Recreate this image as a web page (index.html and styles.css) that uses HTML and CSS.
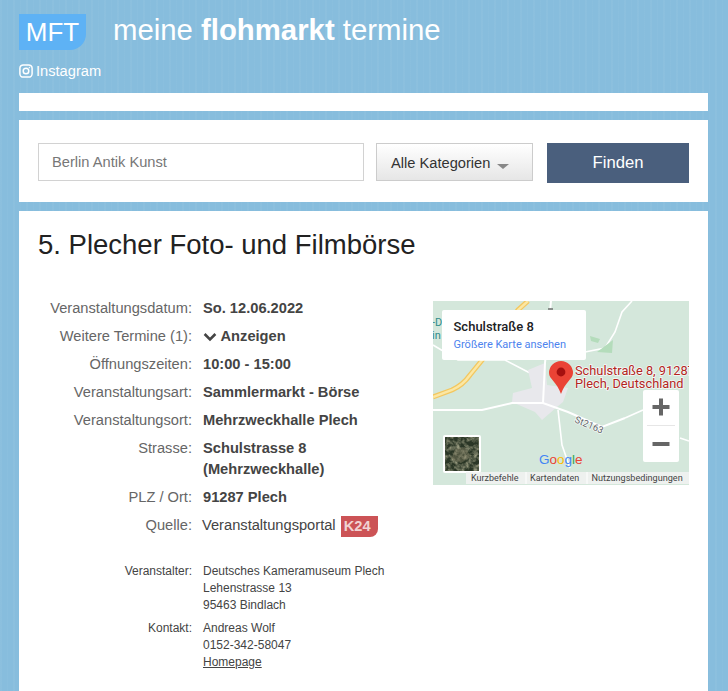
FILE: index.html
```html
<!DOCTYPE html>
<html lang="de">
<head>
    <meta charset="UTF-8">
    <meta name="viewport" content="width=device-width, initial-scale=1.0">
    <title>5. Plecher Foto- und Filmbörse</title>
    <link rel="stylesheet" href="styles.css">
</head>
<body>
    <header class="site-header">
        <div class="brand">
            <div class="logo">MFT</div>
            <div class="site-title">meine <b>flohmarkt</b> termine</div>
        </div>
        <a class="insta" href="#">
            <svg class="insta-icon" width="14" height="14" viewBox="0 0 14 14" fill="none" stroke="#fff" stroke-width="1.5">
                <rect x="0.9" y="0.9" width="12.200" height="12.200" rx="3.4"/>
                <circle cx="7" cy="7" r="2.8"/>
                <circle cx="10.4" cy="3.6" r="0.5" fill="#fff" stroke-width="0.5"/>
            </svg>
            Instagram
        </a>
    </header>

    <div class="strip"></div>

    <form class="card search">
        <input class="search-input" type="text" placeholder="Berlin Antik Kunst">
        <div class="search-select">Alle Kategorien <span class="caret"></span></div>
        <button class="search-btn" type="button">Finden</button>
    </form>

    <main class="card detail">
        <h1>5. Plecher Foto- und Filmbörse</h1>
        <div class="detail-body">
            <div class="facts">
                <dl class="info">
                    <dt>Veranstaltungsdatum:</dt>
                    <dd><b>So. 12.06.2022</b></dd>
                    <dt>Weitere Termine (1):</dt>
                    <dd><b class="more">
                        <svg width="14" height="10" viewBox="0 0 14 10" fill="none" stroke="#444" stroke-width="2.6"><path d="M1.6 2 7 7.4 12.4 2"/></svg>
                        Anzeigen</b></dd>
                    <dt>Öffnungszeiten:</dt>
                    <dd><b>10:00 - 15:00</b></dd>
                    <dt>Veranstaltungsart:</dt>
                    <dd><b>Sammlermarkt - Börse</b></dd>
                    <dt>Veranstaltungsort:</dt>
                    <dd><b>Mehrzweckhalle Plech</b></dd>
                    <dt>Strasse:</dt>
                    <dd><b>Schulstrasse 8<br>(Mehrzweckhalle)</b></dd>
                    <dt>PLZ / Ort:</dt>
                    <dd><b>91287 Plech</b></dd>
                    <dt>Quelle:</dt>
                    <dd class="source">Veranstaltungsportal <span class="badge">K24</span></dd>
                </dl>
                <dl class="info-small">
                    <dt>Veranstalter:</dt>
                    <dd>Deutsches Kameramuseum Plech<br>Lehenstrasse 13<br>95463 Bindlach</dd>
                    <dt>Kontakt:</dt>
                    <dd>Andreas Wolf<br>0152-342-58047<br><a href="#">Homepage</a></dd>
                </dl>
            </div>

            <div class="map">
                <svg width="256" height="184" viewBox="0 0 256 184" font-family="Roboto, sans-serif">
                    <defs>
                        <filter id="sat" x="0" y="0" width="100%" height="100%">
                            <feTurbulence type="fractalNoise" baseFrequency="0.22" numOctaves="3" seed="7"/>
                            <feColorMatrix values="0 0 0 0 0.42  0 0 0 0 0.42  0 0 0 0 0.28  1.900 0 0 0 -0.700"/>
                        </filter>
                    </defs>
                    <rect width="256" height="184" fill="#d4e7db"/>
                    <!-- Strassen -->
                    <path d="M0 96 19 89Q30 84 37 74L50 58 85 9 95 0" fill="none" stroke="#f3c75f" stroke-width="5"/>
                    <path d="M0 96 19 89Q30 84 37 74L50 58 85 9 95 0" fill="none" stroke="#fbe7a4" stroke-width="2.4"/>
                    <path d="M0 44 25 59 72 59 95 71 110 77" fill="none" stroke="#fff" stroke-width="1.6"/>
                    <path d="M199 0 189 11 182 31 172 47 152 51" fill="none" stroke="#fff" stroke-width="1.6"/>
                    <path d="M247 137 256 140M210 109 192 117" fill="none" stroke="#fff" stroke-width="1.6"/>
                    <!-- Ort -->
                    <path d="M95 69 112 62 114 84 135 87 130 101 124 106 109 119 102 111 79 101 80 92 99 87Z" fill="#e8e8ec"/>
                    <path d="M0 109 49 109 79 102 110 102 135 111 169 126 192 117" fill="none" stroke="#fff" stroke-width="2"/>
                    <path d="M118 0 112 62 110 102" fill="none" stroke="#fff" stroke-width="2"/>
                    <path d="M125 109 129 144 137 167" fill="none" stroke="#fff" stroke-width="1.6"/>
                    <path d="M157 35 167 38 165 42 158 40Z M164 51 180 39 179 52Z" fill="#b4dcbb"/>
                    <rect x="115" y="7" width="5" height="4" fill="#8a8f8c"/>
                    <text x="-1" y="25" font-size="11" fill="#2f8c8c">-D</text>
                    <text x="-1" y="38" font-size="11" fill="#2f8c8c">in</text>
                    <text class="map-label" transform="translate(141 121) rotate(23)" font-size="9.5" fill="#5f6368">St2163</text>
                    <!-- Marker -->
                    <path d="M128 93C124 81 116 78 116 72A12 12 0 0 1 140 72C140 78 132 81 128 93Z" fill="#ea4335"/>
                    <circle cx="128" cy="71" r="4.4" fill="#a5100f"/>
                    <text class="map-label" x="142" y="74" font-size="12.800" fill="#b3261e">Schulstraße 8, 91287</text>
                    <text class="map-label" x="142" y="87" font-size="12.800" fill="#b3261e">Plech, Deutschland</text>
                    <!-- Infofenster -->
                    <rect x="9" y="9" width="144" height="50" rx="2" fill="#fff"/>
                    <text x="20.500" y="30" font-size="13" font-weight="500" fill="#202124">Schulstraße 8</text>
                    <text x="20.500" y="46.500" font-size="11" fill="#4d83ee">Größere Karte ansehen</text>
                    <!-- Zoom -->
                    <rect x="210" y="89" width="36" height="72" rx="2" fill="#fff"/>
                    <path d="M219.500 106H236.500M228 97.500V114.500" stroke="#666" stroke-width="4"/>
                    <path d="M214 124.500H242" stroke="#e6e6e6"/>
                    <path d="M219.500 143H236.500" stroke="#666" stroke-width="4"/>
                    <!-- Satellit -->
                    <rect x="10" y="134" width="38" height="38" rx="2" fill="#fff"/>
                    <rect x="12" y="136" width="34" height="34" fill="#2a3626"/>
                    <rect x="12" y="136" width="34" height="34" filter="url(#sat)"/>
                    <path d="M22 148 32 146 38 156 28 162 18 158Z" fill="#8a8468" fill-opacity="0.4"/>
                    <!-- Google -->
                    <text x="106" y="163" font-size="13.500" font-family="Liberation Sans, sans-serif"><tspan fill="#4285f4">G</tspan><tspan fill="#ea4335">o</tspan><tspan fill="#fbbc05">o</tspan><tspan fill="#4285f4">g</tspan><tspan fill="#34a853">l</tspan><tspan fill="#ea4335">e</tspan></text>
                    <!-- Fusszeile -->
                    <rect x="33" y="171" width="223" height="12" fill="#f2f2f2" fill-opacity="0.85"/>
                    <path d="M93 171V183M154 171V183" stroke="#fff"/>
                    <text x="38" y="180" font-size="9" fill="#444">Kurzbefehle</text>
                    <text x="97" y="180" font-size="9" fill="#444">Kartendaten</text>
                    <text x="158.500" y="180" font-size="9.100" fill="#444">Nutzungsbedingungen</text>
                </svg>
            </div>
        </div>
    </main>
</body>
</html>
```

FILE: styles.css
```css
html, body {
    margin: 0;
    padding: 0;
}
body {
    height: 691px;
    overflow: hidden;
    padding: 0 20px 0 19px;
    box-sizing: border-box;
    font-family: "Liberation Sans", Arial, sans-serif;
    color: #444;
    background-color: #87bddd;
    background-image: repeating-linear-gradient(90deg, rgba(255,255,255,0.04) 0 2px, rgba(255,255,255,0) 2px 7px, rgba(255,255,255,0.025) 7px 8px, rgba(255,255,255,0) 8px 13px);
}
.site-header {
    height: 93px;
    padding-top: 14px;
    box-sizing: border-box;
    color: #fff;
}
.brand {
    display: flex;
    align-items: flex-start;
}
.logo {
    width: 67px;
    height: 36px;
    background: #5eb2f5;
    border-bottom-right-radius: 16px;
    color: #fff;
    font-size: 26px;
    line-height: 37px;
    text-align: center;
}
.site-title {
    margin-left: 27px;
    font-size: 29.33px;
    line-height: 32px;
}
.insta {
    display: flex;
    align-items: center;
    gap: 3px;
    margin-top: 13px;
    color: #fff;
    font-size: 14.67px;
    line-height: 16px;
    text-decoration: none;
}
.strip {
    height: 18px;
    background: #fff;
    margin-bottom: 9px;
}
.card {
    background: #fff;
}
.search {
    display: flex;
    align-items: flex-start;
    height: 82px;
    padding: 23px 19px 0;
    box-sizing: border-box;
    margin-bottom: 9px;
}
.search-input {
    width: 326px;
    height: 38px;
    box-sizing: border-box;
    padding: 0 13px 1px;
    border: 1px solid #d2d2d2;
    font: 14.67px "Liberation Sans", Arial, sans-serif;
    color: #555;
    outline: none;
}
.search-input::placeholder {
    color: #777;
    opacity: 1;
}
.search-select {
    width: 157px;
    height: 38px;
    box-sizing: border-box;
    margin-left: 12px;
    padding-left: 14px;
    border: 1px solid #ccc;
    background: linear-gradient(#fff, #e6e6e6);
    font-size: 14.67px;
    line-height: 38px;
    color: #333;
}
.caret {
    display: inline-block;
    margin-left: 3px;
    border-top: 5px solid #888;
    border-left: 6px solid transparent;
    border-right: 6px solid transparent;
    vertical-align: -1px;
}
.search-btn {
    width: 142px;
    height: 40px;
    margin-left: 14px;
    border: 0;
    background: #4a5f7d;
    color: #fff;
    font: 16.67px "Liberation Sans", Arial, sans-serif;
}
.detail {
    height: 480px;
    padding: 19px 19px 0;
    box-sizing: border-box;
}
h1 {
    margin: 0;
    font-size: 27.5px;
    font-weight: normal;
    line-height: 30px;
    color: #222;
}
.detail-body {
    display: flex;
    justify-content: space-between;
    margin-top: 41px;
}
.info {
    display: grid;
    grid-template-columns: 154px 1fr;
    column-gap: 11px;
    row-gap: 7px;
    margin: -3px 0 0;
    font-size: 14.67px;
    line-height: 21px;
}
.info dt {
    text-align: right;
    color: #666;
}
.info dd {
    margin: 0;
}
.more svg {
    vertical-align: -1px;
}
.info .source {
    margin-left: -1px;
}
.badge {
    display: inline-block;
    width: 37px;
    height: 21px;
    margin-left: 1px;
    padding-left: 3px;
    box-sizing: border-box;
    background: #cc5356;
    border-bottom-right-radius: 8px;
    color: #f1d2d2;
    font-weight: bold;
    line-height: 21px;
    vertical-align: -1px;
}
.info-small {
    display: grid;
    grid-template-columns: 154px 1fr;
    column-gap: 11px;
    row-gap: 6px;
    margin: 26px 0 0;
    font-size: 12px;
    line-height: 17px;
}
.info-small dt {
    text-align: right;
}
.info-small dd {
    margin: 0;
}
.info-small a {
    color: #444;
}
.map {
    width: 256px;
    height: 184px;
}
.map svg {
    display: block;
}
.map-label {
    paint-order: stroke;
    stroke: #fff;
    stroke-width: 1.5px;
    stroke-opacity: 0.8;
}
```
